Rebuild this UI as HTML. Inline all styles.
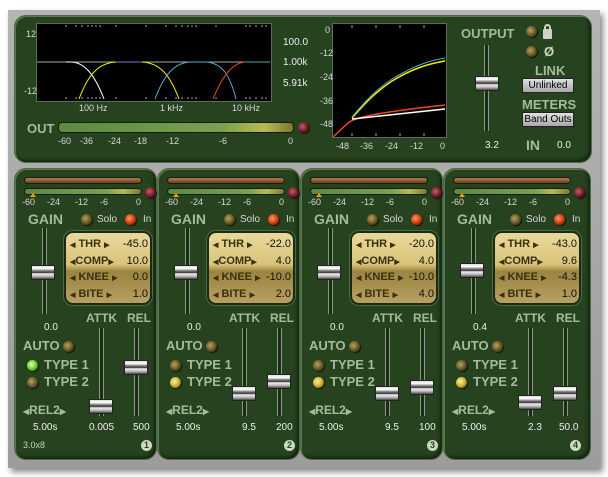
<!DOCTYPE html><html><head><style>
*{margin:0;padding:0;box-sizing:border-box}
body{width:608px;height:477px;background:#fff;position:relative;overflow:hidden;font-family:"Liberation Sans",sans-serif}
.a{position:absolute}
.frame{left:8px;top:10px;width:592px;height:458px;background:linear-gradient(#b4b4b4,#9c9c9c);box-shadow:3px 4px 6px #888}
.pnl{background:#26421f;border:1px solid #4d6a44;border-radius:12px;box-shadow:inset 1px 1px 0 #5b7a50,inset -2px -2px 3px #132410}
.lbl{color:#a7bb98;font-weight:bold;font-size:13px;letter-spacing:0}
.w{color:#eee;font-size:10px}
.s{color:#d8d8d8;font-size:9px}
.led{width:11px;height:11px;border-radius:50%;background:radial-gradient(circle at 40% 40%,#b9a45a,#4a3d18 70%);box-shadow:1px 1px 1px #0c1a08}
.ledr{background:radial-gradient(circle at 40% 40%,#ff9a70,#d43e10 50%,#5a1a08 90%)}
.ledg{background:radial-gradient(circle at 40% 40%,#eaffb0,#6ad030 50%,#2a5010 90%)}
.ledy{background:radial-gradient(circle at 40% 40%,#fff0a0,#d0b030 50%,#504010 90%)}
.ledm{background:radial-gradient(circle at 40% 40%,#c06070,#6a1020 60%,#2a0808 90%)}
.track{width:5px;background:#1a2c16;border-left:1px solid #8a9a80;border-right:1px solid #8a9a80}
.knob{width:24px;height:15px;background:linear-gradient(#ddd 0,#fff 20%,#888 35%,#333 50%,#eee 60%,#bbb 80%,#444 100%);border:1px solid #222}
.bar{height:7px;border-radius:4px;border:1px solid #10200c}
.ybox{width:88px;height:74px;border-radius:9px;background:linear-gradient(#e9d99a,#d8c47a 45%,#9a8440 55%,#b8a062 100%);border:2px solid #1b2a14;box-shadow:0 0 0 1px #4d6a44}
.row{position:absolute;left:4px;width:78px;font-size:11px;font-weight:bold;color:#222}
.row b{position:absolute;left:0;color:#3a3010}
.row i{position:absolute;right:0;font-style:normal;font-weight:normal;color:#111}
.btn{background:linear-gradient(#e0e0e0,#a8a8a8);border:1px solid #222;font-size:10px;color:#000;text-align:center;line-height:13px}
.num{width:11px;height:11px;border-radius:50%;background:#cfd8c8;color:#26421f;font-size:9px;font-weight:bold;text-align:center;line-height:11px}
</style></head><body>
<div class="a frame"></div>
<div class="a pnl" style="left:14px;top:15px;width:578px;height:148px"></div>
<!-- EQ graph -->
<svg class="a" style="left:36px;top:23px" width="237" height="80">
<rect x="0.5" y="0.5" width="235" height="78" fill="#000" stroke="#5a7050"/>
<g stroke="#aaa" stroke-width="1">
<path d="M30 2v2M40 2v2M46 2v2M52 2v2M56 2v2M60 2v2M64 2v2M80 2v2M110 2v2M130 2v2M140 2v2M146 2v2M152 2v2M156 2v2M160 2v2M180 2v2M210 2v2M214 2v2M220 2v2M226 2v2M230 2v2"/>
<path d="M30 74v2M40 74v2M46 74v2M52 74v2M56 74v2M60 74v2M64 74v2M80 74v2M110 74v2M130 74v2M140 74v2M146 74v2M152 74v2M156 74v2M160 74v2M180 74v2M210 74v2M214 74v2M220 74v2M226 74v2M230 74v2"/></g>
<path d="M1 39H234" stroke="#aaa"/>
<path d="M30 39H36C48 40 58 50 68 76" stroke="#fff" fill="none"/>
<path d="M43 76C52 52 62 40 80 39" stroke="#ee0" fill="none"/>
<path d="M80 39H106" stroke="#77c"/>
<path d="M106 39C124 40 134 52 143 76" stroke="#ee0" fill="none"/>
<path d="M119 76C128 52 138 40 154 39H170C186 40 194 52 200 76" stroke="#5ac" fill="none"/>
<path d="M177 76C186 54 196 40 209 39" stroke="#e42" fill="none"/>
<path d="M209 39H234" stroke="#5a9"/>
</svg>
<div class="a s" style="left:26px;top:29px">12</div>
<div class="a s" style="left:24px;top:86px">-12</div>
<div class="a s" style="left:79px;top:103px">100 Hz</div>
<div class="a s" style="left:160px;top:103px">1 kHz</div>
<div class="a s" style="left:232px;top:103px">10 kHz</div>
<div class="a w" style="left:283px;top:37px">100.0</div>
<div class="a w" style="left:283px;top:57px">1.00k</div>
<div class="a w" style="left:283px;top:78px">5.91k</div>
<div class="a lbl" style="left:27px;top:121px">OUT</div>
<div class="a bar" style="left:58px;top:122px;width:236px;height:11px;background:linear-gradient(90deg,#5b8a40,#7aa050 70%,#bdb850 88%,#7a7830)"></div>
<div class="a led ledm" style="left:298px;top:122px"></div>
<div class="a s" style="left:58px;top:136px;word-spacing:0">-60</div>
<div class="a s" style="left:80px;top:136px">-36</div>
<div class="a s" style="left:108px;top:136px">-24</div>
<div class="a s" style="left:134px;top:136px">-18</div>
<div class="a s" style="left:166px;top:136px">-12</div>
<div class="a s" style="left:219px;top:136px">-6</div>
<div class="a s" style="left:288px;top:136px">0</div>
<!-- comp graph -->
<svg class="a" style="left:332px;top:23px" width="116" height="116">
<rect x="0.5" y="0.5" width="114" height="114" fill="#000" stroke="#5a7050"/>
<g stroke="#aaa"><path d="M20 2v3M44 2v3M68 2v3M92 2v3M20 110v3M44 110v3M68 110v3M92 110v3"/></g>
<path d="M1 114L16 100C22 95 40 90 113 82" stroke="#e42" fill="none" stroke-width="1.5"/>
<path d="M20 96L113 86" stroke="#fff" fill="none" stroke-width="1.5"/>
<path d="M20 95C35 78 45 68 60 58C80 46 95 41 113 38" stroke="#ee0" fill="none" stroke-width="1.5"/>
<path d="M20 94C35 76 45 66 60 56C80 44 95 38 113 35" stroke="#5ac" fill="none" stroke-width="1"/>
</svg>
<div class="a s" style="left:325px;top:25px">0</div>
<div class="a s" style="left:320px;top:48px">-12</div>
<div class="a s" style="left:320px;top:72px">-24</div>
<div class="a s" style="left:320px;top:96px">-36</div>
<div class="a s" style="left:320px;top:119px">-48</div>
<div class="a s" style="left:336px;top:141px">-48</div>
<div class="a s" style="left:360px;top:141px">-36</div>
<div class="a s" style="left:385px;top:141px">-24</div>
<div class="a s" style="left:410px;top:141px">-12</div>
<div class="a s" style="left:440px;top:141px">0</div>
<div class="a lbl" style="left:461px;top:26px">OUTPUT</div>
<div class="a track" style="left:484px;top:45px;height:86px"></div>
<div class="a knob" style="left:475px;top:76px"></div>
<div class="a w" style="left:485px;top:140px">3.2</div>
<div class="a led" style="left:526px;top:26px"></div>
<div class="a led" style="left:526px;top:46px"></div>
<div class="a" style="left:543px;top:26px;width:9px;height:10px;background:#ccd5c4;border-radius:1px;margin-top:3px"></div>
<div class="a" style="left:544px;top:24px;width:7px;height:7px;border:2px solid #ccd5c4;border-bottom:none;border-radius:4px 4px 0 0"></div>
<div class="a lbl" style="left:544px;top:44px;color:#ccd5c4">Ø</div>
<div class="a lbl" style="left:535px;top:63px">LINK</div>
<div class="a btn" style="left:522px;top:78px;width:52px;height:15px">Unlinked</div>
<div class="a lbl" style="left:522px;top:97px">METERS</div>
<div class="a btn" style="left:522px;top:112px;width:52px;height:15px">Band Outs</div>
<div class="a lbl" style="left:526px;top:137px;font-size:14px">IN</div>
<div class="a w" style="left:557px;top:140px">0.0</div>
<div id="bands"></div>
<script>
var B=[
{x:14,v:["-45.0","10.0","0.0","1.0"],g:"0.0",at:"0.005",rl:"500",t:1,gk:265,ak:399,rk:360,n:1},
{x:157,v:["-22.0","4.0","-10.0","2.0"],g:"0.0",at:"9.5",rl:"200",t:2,gk:265,ak:386,rk:374,n:2},
{x:300,v:["-20.0","4.0","-10.0","4.0"],g:"0.0",at:"9.5",rl:"100",t:2,gk:265,ak:386,rk:380,n:3},
{x:443,v:["-43.0","9.6","-4.3","1.0"],g:"0.4",at:"2.3",rl:"50.0",t:2,gk:263,ak:395,rk:386,n:4}];
var h="";
B.forEach(function(b){var o=b.x-14;function p(x,y,c,s,t){h+='<div class="a '+c+'" style="left:'+(x+o)+'px;top:'+y+'px;'+(s||'')+'">'+(t||'')+'</div>'}
p(14,168,'pnl','width:'+(b.n==4?148:143)+'px;height:292px');
p(24,177,'bar','width:118px;background:linear-gradient(#b87a50,#6a4020)');
p(24,188,'bar','width:118px;background:linear-gradient(90deg,#5b8a40,#7aa050 70%,#bdb850 85%,#7a7830)');
p(145,187,'led ledm');
p(30,193,'','width:0;height:0;border:3px solid transparent;border-bottom:4px solid #f90;border-top:0');
p(22,197,'s','','-60');p(47,197,'s','','-24');p(75,197,'s','','-12');p(100,197,'s','','-6');p(136,197,'s','','0');
p(28,211,'lbl','font-size:14px','GAIN');
p(81,214,'led');p(97,214,'s','font-size:10px','Solo');p(125,214,'led ledr');p(143,214,'s','font-size:10px','In');
p(42,228,'track','height:86px');p(31,b.gk,'knob');
var r='';var L=["&#9664; THR &#9654;","&#9664;COMP&#9654;","&#9664; KNEE &#9654;","&#9664; BITE &#9654;"];
for(var i=0;i<4;i++)r+='<div class="row" style="top:'+(5+i*16.5)+'px"><b>'+L[i].replace(/&#9664;/,'<span style="font-size:7px">&#9664;</span>').replace(/&#9654;/,'<span style="font-size:7px">&#9654;</span>')+'</b><i>'+b.v[i]+'</i></div>';
p(64,231,'ybox','',r);
p(44,322,'w','',b.g);
p(86,311,'lbl','font-size:12px','ATTK');p(127,311,'lbl','font-size:12px','REL');
p(99,328,'track','height:88px');p(89,b.ak,'knob');
p(134,328,'track','height:88px');p(124,b.rk,'knob');
p(23,338,'lbl','font-size:13px','AUTO');p(63,341,'led');
p(27,360,'led '+(b.t==1?'ledg':''));p(44,357,'lbl','font-size:13px','TYPE 1');
p(27,377,'led '+(b.t==2?'ledy':''));p(44,374,'lbl','font-size:13px','TYPE 2');
p(23,403,'lbl','font-size:12px','<span style="font-size:8px">&#9664;</span>REL2<span style="font-size:8px">&#9654;</span>');
p(33,422,'w','',"5.00s");p(b.at.length>3?89:99,422,'w','',b.at);p(b.rl.length>3?130:133,422,'w','',b.rl);
p(141,440,'num','',b.n);
if(b.n==1)p(23,440,'s','color:#c8d0c0','3.0x8');
});
document.getElementById('bands').innerHTML=h;
</script>
</body></html>
